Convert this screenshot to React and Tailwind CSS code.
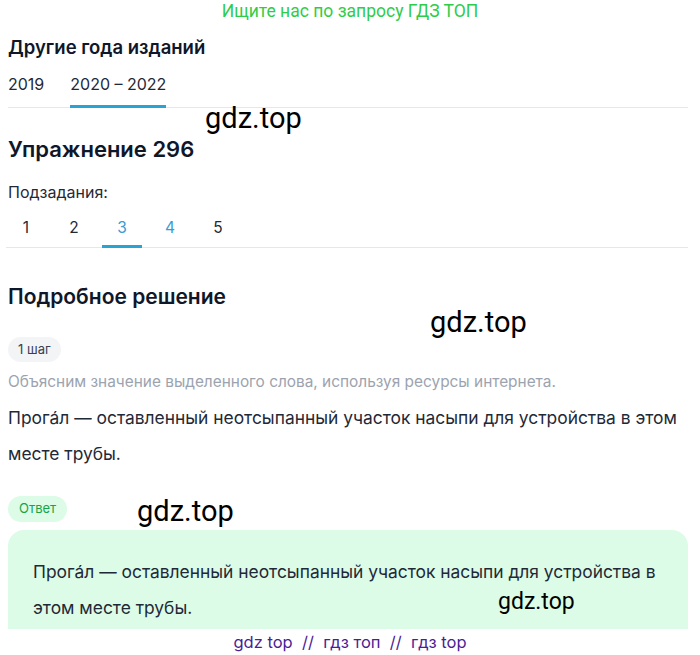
import React from 'react'

const years = ['2019', '2020 – 2022']
const subtasks = ['1', '2', '3', '4', '5']

function Mark({ className }) {
  return (
    <span
      className={`absolute pointer-events-none text-black leading-none ${className}`}
      style={{ fontFamily: 'Roboto, sans-serif' }}
    >
      gdz.top
    </span>
  )
}

export default function App() {
  const answer = 'Прога́л — оставленный неотсыпанный участок насыпи для устройства в этом месте трубы.'

  return (
    <div className="relative w-[700px] h-[655px] overflow-hidden bg-white font-['Inter',sans-serif] text-[#1f2937]">
      <p className="h-[22px] text-center text-[17.5px] leading-[22px] text-[#2fcc4a] font-['Roboto',sans-serif]">
        Ищите нас по запросу ГДЗ ТОП
      </p>

      <div className="pl-2 pr-3">
        {/* Years */}
        <h2 className="mt-[13px] text-[18.5px] leading-6 font-semibold text-[#0f172a]">Другие года изданий</h2>
        <div className="mt-[13px] flex gap-[26px] border-b border-gray-200">
          {years.map((y, i) => (
            <span
              key={y}
              className={`-mb-px pb-[9px] text-[16px] leading-6 border-b-[3px] ${
                i === 1 ? 'border-[#29a3d3]' : 'border-transparent'
              }`}
            >
              {y}
            </span>
          ))}
        </div>

        {/* Exercise */}
        <h1 className="mt-[27px] text-[22px] leading-7 font-semibold text-[#0f172a]">Упражнение 296</h1>
        <p className="mt-[17px] text-[16px] leading-6">Подзадания:</p>
        <div className="mt-[12px] flex gap-2 border-b border-gray-200 -ml-[2px]">
          {subtasks.map((n) => (
            <span
              key={n}
              className={`-mb-px w-10 pb-[5px] text-center text-[15.5px] leading-6 border-b-[3px] ${
                n === '3' ? 'border-[#29a3d3]' : 'border-transparent'
              } ${n === '3' || n === '4' ? 'text-[#3a9bd1]' : ''}`}
            >
              {n}
            </span>
          ))}
        </div>

        {/* Solution */}
        <h2 className="mt-[35px] text-[21px] leading-7 font-semibold text-[#0f172a]">Подробное решение</h2>
        <span className="mt-[26px] flex w-fit h-[25px] items-center rounded-full bg-[#f3f4f6] px-[10px] text-[13px] text-[#374151]">
          1 шаг
        </span>
        <p className="mt-[9px] text-[15.4px] leading-[22px] text-[#9ca3af]">
          Объясним значение выделенного слова, используя ресурсы интернета.
        </p>
        <p className="mt-[7px] text-[17.4px] leading-9 text-[#1f2937]">{answer}</p>

        <span className="mt-[24px] flex w-fit h-[26px] items-center rounded-full bg-[#dcfce7] px-[11px] text-[13px] text-[#16a34a]">
          Ответ
        </span>
        <div className="mt-[8px] rounded-t-2xl bg-[#dcfce7] pl-[25px] pr-6 pt-[24px] pb-[3px]">
          <p className="text-[17.4px] leading-9 text-[#1f2937]">{answer}</p>
        </div>
      </div>

      <p className="h-[27px] text-center text-[16.5px] leading-[27px] text-[#4c1d95]">
        gdz top &nbsp;//&nbsp; гдз топ &nbsp;//&nbsp; гдз top
      </p>

      <Mark className="left-[205px] top-[104px] text-[29px]" />
      <Mark className="left-[430px] top-[308px] text-[29px]" />
      <Mark className="left-[137px] top-[497px] text-[29px]" />
      <Mark className="left-[498px] top-[590px] text-[23px]" />
    </div>
  )
}
